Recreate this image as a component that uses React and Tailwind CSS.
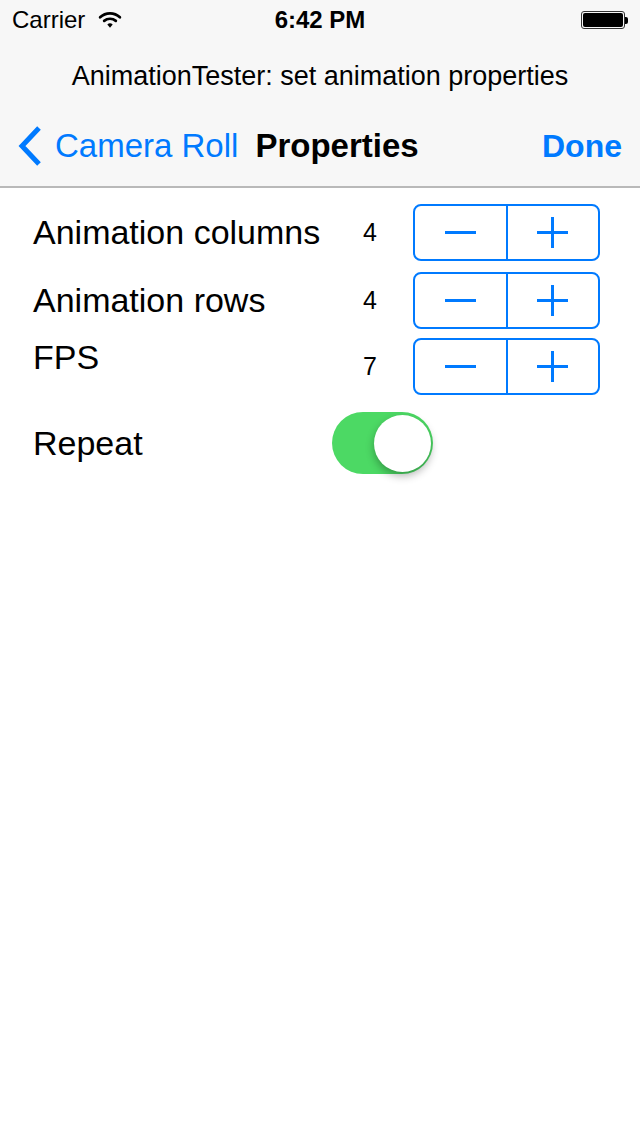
import React from 'react';

const Stepper = () => (
  <div className="flex h-[57px] w-[187px] rounded-[8px] border-2 border-[#007aff]">
    <div className="flex flex-1 items-center justify-center border-r-2 border-[#007aff]">
      <div className="h-[3px] w-[31px] bg-[#007aff]" />
    </div>
    <div className="relative flex flex-1 items-center justify-center">
      <div className="h-[3px] w-[31px] bg-[#007aff]" />
      <div className="absolute h-[31px] w-[3px] bg-[#007aff]" />
    </div>
  </div>
);

const App = () => {
  const font = { fontFamily: '"Liberation Sans", Arial, sans-serif' };
  return (
    <div className="min-h-[1136px] w-[640px] bg-white text-black" style={font}>
      {/* Header */}
      <div className="border-b-2 border-[#b9b9b9] bg-[#f7f7f7]">
        <div className="relative flex h-[40px] items-center px-[12px]">
          <span className="text-[24px] leading-none">Carrier</span>
          <svg className="ml-[13px]" width="24" height="18" viewBox="0 0 26 20">
            <path d="M2 7 A16 16 0 0 1 24 7" fill="none" stroke="#000" strokeWidth="3" strokeLinecap="round" />
            <path d="M6.5 11 A10 10 0 0 1 19.5 11" fill="none" stroke="#000" strokeWidth="3" strokeLinecap="round" />
            <path d="M10 15 L13 18.5 L16 15 A4.5 4.5 0 0 0 10 15 Z" fill="#000" />
          </svg>
          <span className="absolute left-1/2 -translate-x-1/2 text-[24px] font-bold leading-none">6:42 PM</span>
          <div className="ml-auto flex items-center">
            <div className="h-[18px] w-[44px] rounded-[3px] border border-[#333] p-[1px]">
              <div className="h-full w-full rounded-[2px] bg-black" />
            </div>
            <div className="h-[7px] w-[3px] rounded-r-[2px] bg-black" />
          </div>
        </div>
        <div className="flex h-[72px] items-center justify-center text-[27px]">
          AnimationTester: set animation properties
        </div>
        <div className="flex h-[74px] items-center px-[17px] pb-[7px]">
          <svg width="25" height="40" viewBox="0 0 25 40">
            <path d="M22 2 L5 20 L22 38" fill="none" stroke="#007aff" strokeWidth="5" strokeLinejoin="miter" />
          </svg>
          <span className="ml-[13px] text-[33px] text-[#007aff]">Camera Roll</span>
          <span className="ml-[17px] text-[33px] font-bold">Properties</span>
          <span className="ml-auto pr-[1px] text-[32px] font-bold text-[#007aff]">Done</span>
        </div>
      </div>

      {/* Properties */}
      <div className="flex flex-col pl-[33px] pt-[16px]">
        <div className="flex h-[57px] items-center">
          <span className="w-[330px] text-[34px]">Animation columns</span>
          <span className="w-[50px] text-[25px]">4</span>
          <Stepper />
        </div>
        <div className="mt-[11px] flex h-[57px] items-center">
          <span className="w-[330px] text-[34px]">Animation rows</span>
          <span className="w-[50px] text-[25px]">4</span>
          <Stepper />
        </div>
        <div className="mt-[9px] flex h-[57px] items-center">
          <span className="mb-[18px] w-[330px] text-[34px]">FPS</span>
          <span className="w-[50px] text-[25px]">7</span>
          <Stepper />
        </div>
        <div className="mt-[17px] flex h-[62px] items-center">
          <span className="w-[299px] text-[34px]">Repeat</span>
          <div className="flex h-[62px] w-[101px] items-center justify-end rounded-full bg-[#4cd964] pr-[2px]">
            <div className="h-[57px] w-[57px] rounded-full bg-white shadow-[0_4px_8px_rgba(0,0,0,0.3)]" />
          </div>
        </div>
      </div>
    </div>
  );
};

export default App;
